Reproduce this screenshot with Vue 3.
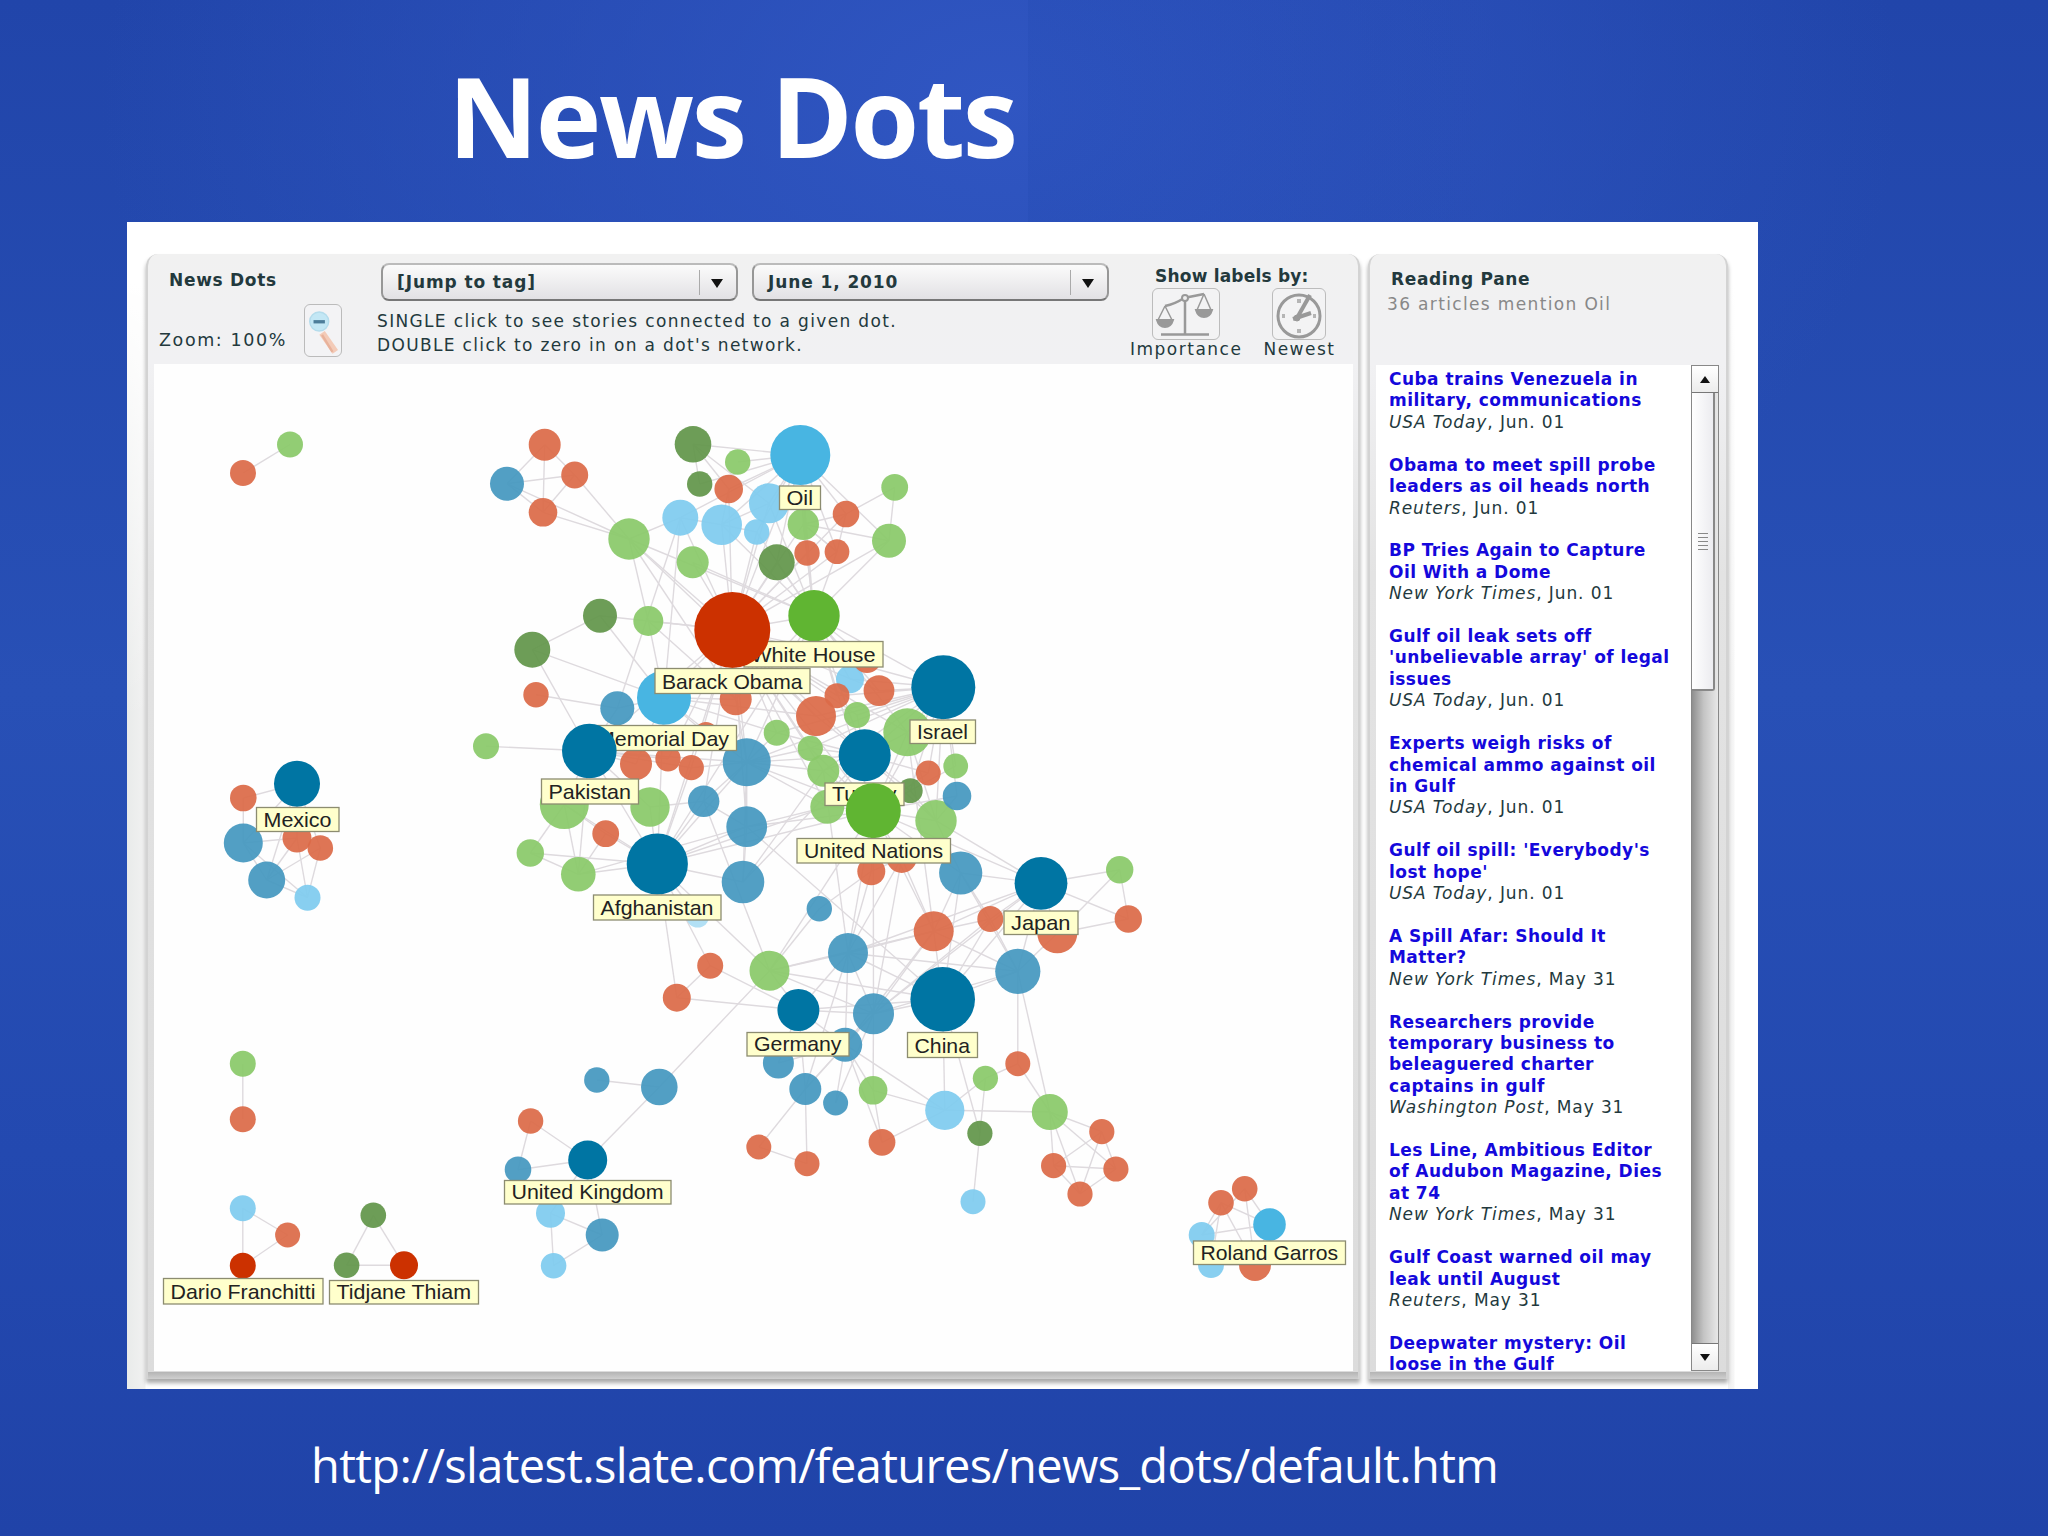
<template>
  <div class="slide">
    <h1 class="title">News Dots</h1>

    <div class="page">
      <section class="panel map-panel">
        <header class="map-header">
          <div class="brand">
            <b class="brand-name">News Dots</b>
            <div class="zoom-row">
              <span>Zoom: 100%</span>
              <button class="zoom-btn">
                <svg viewBox="0 0 38 52" width="38" height="52">
                  <path d="M18 28 L32 48" stroke="#f3cbb8" stroke-width="7" />
                  <path d="M18 30 L29 48" stroke="#e8b29b" stroke-width="2.5" />
                  <circle cx="15" cy="16" r="10" fill="#c3e7f5" stroke="#b4dcec" stroke-width="1.5" />
                  <rect x="9" y="14.5" width="12" height="3.5" fill="#4c7d9a" />
                </svg>
              </button>
            </div>
          </div>

          <div class="controls">
            <div class="selects">
              <div v-for="s in selects" :key="s" class="select">
                <span class="select-text">{{ s }}</span>
                <span class="select-arrow"></span>
              </div>
            </div>
            <p class="help">SINGLE click to see stories connected to a given dot.</p>
            <p class="help">DOUBLE click to zero in on a dot's network.</p>
          </div>

          <div class="labels-by">
            <b class="labels-title">Show labels by:</b>
            <div class="modes">
              <div class="mode">
                <span class="mode-btn">
                  <svg viewBox="0 0 66 50" width="66" height="50" fill="none" stroke="#999" stroke-width="2">
                    <path d="M32 8 V45 M8 45.5 H56 M12 17 Q22 15 31 9 L51 5" stroke-width="2.5" />
                    <circle cx="32" cy="9" r="3" fill="#eee" />
                    <path d="M12 17 L5 31 M12 17 L19 31 M51 5 L44 21 M51 5 L58 21" stroke-width="1.5" />
                    <path d="M4 31 H20 Q18 38 12 38 Q6 38 4 31 Z M43 21 H59 Q57 28 51 28 Q45 28 43 21 Z" fill="#999" />
                  </svg>
                </span>
                <span>Importance</span>
              </div>
              <div class="mode">
                <span class="mode-btn">
                  <svg viewBox="0 0 52 50" width="52" height="50" fill="none" stroke="#999">
                    <circle cx="26" cy="27" r="21" stroke-width="3" />
                    <path d="M24 29 L37 6" stroke-width="4" />
                    <path d="M20 30 L38 24" stroke-width="4" />
                    <circle cx="24" cy="29" r="3" fill="#999" />
                    <path d="M26 10 v4 M26 40 v4 M9 27 h3 M40 27 h3" stroke-width="4" stroke="#b5b5b5" />
                  </svg>
                </span>
                <span>Newest</span>
              </div>
            </div>
          </div>
        </header>

        <svg class="map" viewBox="154 364 1199 1007" width="1199" height="1007">
          <g class="edges">
            <line v-for="(e, i) in lines" :key="i" :x1="e[0].x" :y1="e[0].y" :x2="e[1].x" :y2="e[1].y" />
          </g>
          <circle
            v-for="(d, i) in small"
            :key="i"
            :cx="d.x"
            :cy="d.y"
            :r="d.r"
            :class="['dot', d.kind]"
          />
          <g v-for="t in tags" :key="t.text">
            <circle :cx="t.x" :cy="t.y" :r="t.r" :class="t.kind" />
            <rect class="tag" :x="t.left" :y="t.top" :width="t.right - t.left" :height="t.bottom - t.top" />
            <text
              class="tag-text"
              :x="t.left + 7"
              :y="t.bottom - 5"
              :textLength="t.right - t.left - 14.5"
              lengthAdjust="spacingAndGlyphs"
            >{{ t.text }}</text>
          </g>
        </svg>
      </section>

      <section class="panel reading-panel">
        <header class="reading-header">
          <b class="reading-title">Reading Pane</b>
          <span class="reading-count">36 articles mention Oil</span>
        </header>
        <div class="reading-body">
          <div class="articles">
            <article v-for="a in articles" :key="a.lines[0]" class="article">
              <a v-for="line in a.lines" :key="line" class="headline">{{ line }}</a>
              <div v-if="a.source" class="source"><i>{{ a.source }}</i>, {{ a.date }}</div>
            </article>
          </div>
          <div class="scrollbar">
            <span class="scroll-btn"><i class="up"></i></span>
            <div class="track">
              <div class="thumb"><span class="grip"></span></div>
            </div>
            <span class="scroll-btn"><i class="down"></i></span>
          </div>
        </div>
      </section>
    </div>

    <p class="url">http://slatest.slate.com/features/news_dots/default.htm</p>
  </div>
</template>

<script setup>
const selects = ['[Jump to tag]', 'June 1, 2010']

// id: [x, y, radius, kind]
const dots = {
  a1: [290, 444.5, 13, 'green'], a2: [243, 473, 13, 'orange'],
  b1: [544.7, 444.7, 16, 'orange'], b2: [507, 483.7, 17, 'blue'],
  b3: [574.7, 475, 13.5, 'orange'], b4: [543, 512.3, 14.3, 'orange'],
  b5: [629, 539, 20.7, 'green'],
  c1: [693, 444.3, 18.3, 'olive'], c2: [737.7, 462, 12.7, 'green'],
  c3: [699.7, 484, 12.7, 'olive'], c4: [728.7, 489, 14.3, 'orange'],
  c5: [680.3, 517.7, 18, 'light'], c6: [721.7, 524.7, 20.3, 'light'],
  c7: [769, 503.3, 20, 'light'], c8: [756.7, 532, 12.7, 'light'],
  c9: [803.3, 524.3, 15.7, 'green'], c10: [846, 514, 13.3, 'orange'],
  c11: [894.7, 487.3, 13.4, 'green'], c12: [889, 540.7, 17, 'green'],
  c13: [692.7, 562.3, 16, 'green'], c14: [776.7, 562.3, 18, 'olive'],
  c15: [807, 553, 12.7, 'orange'], c16: [837, 551.7, 12.4, 'orange'],
  d1: [600, 615.7, 17, 'olive'], d2: [648.3, 621, 15, 'green'],
  d3: [532.3, 649.7, 18, 'olive'], d4: [536, 694.7, 12.7, 'orange'],
  d5: [617.3, 708.3, 17, 'blue'], d6: [735.7, 699.3, 16, 'orange'],
  d7: [486, 746.3, 13, 'green'], d8: [706, 734, 12, 'orange'],
  e1: [816, 716, 20, 'orange'], e2: [850, 679.3, 14, 'light'],
  e3: [837, 695.7, 12.5, 'orange'], e4: [867, 659, 14, 'orange'],
  e5: [879, 690.7, 15.4, 'orange'], e6: [857, 715, 13, 'green'],
  e7: [907.3, 732.3, 24, 'green'], e8: [776.7, 732.7, 13, 'green'],
  e9: [810.3, 748.3, 12.6, 'green'], e10: [823.3, 770.7, 16, 'green'],
  e11: [746.7, 762.3, 24, 'blue'], e12: [827.3, 806.7, 17, 'green'],
  e13: [936, 820.7, 20.7, 'green'], e14: [910.3, 790.7, 12.4, 'olive'],
  e15: [928.3, 773, 12.4, 'orange'], e16: [955.7, 766, 12.4, 'green'],
  e17: [957, 796, 14.3, 'blue'],
  f1: [636, 764, 16, 'orange'], f2: [668, 758.7, 12.7, 'orange'],
  f3: [691.3, 767.7, 12.6, 'orange'], f4: [564.3, 804.5, 24.5, 'green'],
  f5: [650, 807, 19.7, 'green'], f6: [605.7, 833.7, 13.4, 'orange'],
  f7: [703.7, 801.3, 15.7, 'blue'], f8: [530.3, 853, 13.7, 'green'],
  f9: [578.3, 874.3, 17.3, 'green'], f10: [746.7, 826.7, 20.4, 'blue'],
  f11: [743, 882, 21.3, 'blue'], f12: [697.7, 916, 11.5, 'light faint'],
  g1: [819.3, 908.7, 12.7, 'blue'], g2: [871.3, 871.3, 14, 'orange'],
  g3: [901.7, 858, 15, 'orange'], g4: [960.7, 873, 21.6, 'blue'],
  g5: [1119.7, 869.7, 13.7, 'green'], g6: [1128.3, 919, 13.7, 'orange'],
  g7: [990.3, 919, 13, 'orange'], g8: [1057.3, 933.3, 20, 'orange'],
  g9: [933.7, 931.3, 20, 'orange'],
  h1: [710.2, 965.7, 13, 'orange'], h2: [676.8, 997.7, 14, 'orange'],
  h3: [769.5, 970.7, 20, 'green'], h4: [848, 953, 20, 'blue'],
  h5: [873.5, 1013.7, 20.5, 'blue'], h6: [845.2, 1044.7, 17, 'blue'],
  h7: [778.4, 1063, 15.5, 'blue'], h8: [805.3, 1089, 16, 'blue'],
  h9: [835.6, 1103, 12.5, 'blue'], h10: [873.1, 1090.3, 14.3, 'green'],
  h11: [758.8, 1147, 12.5, 'orange'], h12: [807, 1163.7, 12.5, 'orange'],
  h13: [882, 1142.3, 13.4, 'orange'], h14: [944.8, 1110.3, 19.6, 'light'],
  h15: [985.4, 1078.3, 12.6, 'green'], h16: [1017.8, 1063.7, 12.5, 'orange'],
  h17: [1017.8, 971.3, 22.6, 'blue'], h18: [979.9, 1133.3, 12.6, 'olive'],
  h19: [973, 1201.7, 12.5, 'light'],
  i1: [1049.8, 1112, 18, 'green'], i2: [1101.8, 1131.7, 12.6, 'orange'],
  i3: [1053.6, 1165.7, 12.6, 'orange'], i4: [1115.9, 1169, 12.6, 'orange'],
  i5: [1080, 1194, 12.6, 'orange'],
  j1: [659.3, 1087, 18.3, 'blue'], j2: [596.8, 1080, 12.7, 'blue'],
  j3: [530.6, 1121, 12.7, 'orange'], j4: [518, 1169.7, 13.3, 'blue'],
  j5: [550.5, 1213.3, 14.5, 'light'], j6: [602.2, 1235, 16.5, 'blue'],
  j7: [553.6, 1265.7, 12.8, 'light'],
  k1: [242.8, 1063.7, 13, 'green'], k2: [242.8, 1119.3, 13, 'orange'],
  k3: [242.8, 1208.3, 13, 'light'], k4: [287.6, 1235, 12.5, 'orange'],
  k5: [373.3, 1215.3, 12.8, 'olive'], k6: [346.6, 1265.3, 12.8, 'olive'],
  m1: [243.3, 798, 13.3, 'orange'], m2: [243.3, 843, 19.5, 'blue'],
  m3: [297, 838, 14.5, 'orange'], m4: [320.3, 848, 12.8, 'orange'],
  m5: [266.7, 880, 18.5, 'blue'], m6: [307.5, 897.7, 13, 'light'],
  r1: [1244.7, 1188.7, 12.8, 'orange'], r2: [1221, 1202.7, 12.8, 'orange'],
  r3: [1201.7, 1235, 13, 'light'], r4: [1211, 1265, 13, 'light'],
  r5: [1255, 1265, 16, 'orange'],
}

// id: [x, y, radius, kind, label, left, top, right, bottom], back to front
const labelled = {
  oil: [800.3, 455, 30, 'sky', 'Oil', 779.5, 486, 820.5, 509.5],
  white: [814, 615.7, 25.7, 'lime', 'White House', 744, 641.5, 883, 667],
  memorial: [664, 697.7, 27, 'sky', 'Memorial Day', 590, 725.5, 736.5, 750.5],
  obama: [732.3, 630, 38, 'red', 'Barack Obama', 655, 668.5, 810, 693.5],
  israel: [943.3, 687.3, 32, 'navy', 'Israel', 910, 720, 975.5, 743.5],
  pakistan: [589.3, 751, 27.3, 'navy', 'Pakistan', 541.5, 779, 638.5, 804],
  turkey: [864.7, 755.3, 26, 'navy', 'Turkey', 825, 783, 904, 805.5],
  un: [873.3, 810.7, 27.5, 'lime', 'United Nations', 797, 838.5, 950.5, 863],
  afghan: [657.3, 864, 30.6, 'navy', 'Afghanistan', 593.5, 895, 721, 920],
  japan: [1041, 883.3, 26.4, 'navy', 'Japan', 1004, 911, 1078, 934.5],
  germany: [798.4, 1010, 21, 'navy', 'Germany', 747, 1032.5, 849, 1056],
  china: [942.7, 999.3, 32.3, 'navy', 'China', 907.5, 1032.5, 977.5, 1057.5],
  uk: [587.7, 1160, 19.5, 'navy', 'United Kingdom', 504.5, 1180.5, 671, 1204],
  dario: [242.8, 1265.7, 13, 'red', 'Dario Franchitti', 163.5, 1278.5, 323, 1304],
  tidjane: [404, 1265.3, 14, 'red', 'Tidjane Thiam', 329.5, 1280.5, 478.5, 1304],
  mexico: [297, 783.7, 23, 'navy', 'Mexico', 256.5, 807.5, 339, 831.5],
  roland: [1269.5, 1224.5, 16.3, 'sky', 'Roland Garros', 1193.5, 1241, 1345.5, 1264.5],
}

// each hub is followed by the dots it is linked to
const links = {
  a1: 'a2',
  b1: 'b2 b3 b4',
  b2: 'b3 b4 b5',
  b3: 'b4 b5',
  b4: 'b5',
  b5: 'c5 d2 obama white d6 e1',
  c1: 'oil c3 c4 c7',
  oil: 'c2 c3 c4 c5 c6 c7 c8 c9 c10 c14 c15 c16 obama white c12',
  c5: 'c6 d5 obama memorial',
  c6: 'c7 c8 white c4',
  c9: 'c10 c12 c15 c16',
  c11: 'c12 c10',
  c16: 'c10 c9 white',
  obama: 'c6 c7 c8 c9 c10 c12 c13 c14 c15 c16 d2 d6 white memorial israel e1 e3 e4 e5 e6 e7 e8 e9 e10 e11 turkey un afghan pakistan f3 f2 f7 c4 e12 f10',
  white: 'c8 c7 c12 c14 c15 c13 israel e3 e5 e7 un turkey e11 e2 d6 afghan c9 e4',
  d1: 'd2 d3 memorial',
  d2: 'obama memorial d6',
  d3: 'memorial pakistan',
  d4: 'd5',
  d5: 'memorial pakistan',
  d7: 'pakistan',
  memorial: 'd6 e11 f1 e8 e1 afghan d8',
  israel: 'e1 e2 e3 e5 e6 e7 turkey un e13 e14 e15 e16 e17 e10 e9 e11 e8',
  turkey: 'e1 e6 e7 e9 e10 e12 e13 e14 e15 e11 f11 e8',
  un: 'e7 e9 e10 e12 e13 e14 e15 e16 e17 g2 g3 f10 e11 afghan g4 h4 h5 h3 g9',
  e11: 'e8 e9 e10 e12 f3 f7 f10 d6 f11',
  e13: 'e14 e17 g4 japan e7',
  pakistan: 'f1 f4 f5 f2 f3 afghan e11 f9',
  afghan: 'f4 f5 f6 f7 f9 f8 f10 f11 f12 f3 e11 e12 h1 h2 h3',
  f4: 'f6 f8 f9',
  f8: 'f9',
  f9: 'f6 f10',
  f10: 'f11 f7 e12 china',
  f7: 'h3 f5',
  japan: 'g4 g5 g6 g7 g8 g9 h17 h5 h4 china un',
  g5: 'g6 g8',
  g6: 'g8',
  g4: 'g7 g9 china h17',
  g3: 'g9 h4 g2 h5',
  g2: 'g1 h4',
  g1: 'h3',
  g7: 'g9 h5 h17 china',
  g9: 'china h17 h4 h5 h3 e7',
  e10: 'h4 f11',
  h1: 'h2 germany',
  h2: 'germany',
  h3: 'h4 h5 china germany j1',
  h4: 'h5 h6 china germany h8 h17',
  germany: 'h5 h7 h8 h6 china',
  h5: 'china h6 h10 h17 h8',
  h6: 'h8 h9 h10 h14 h7 h13 g9',
  h8: 'h11 h12',
  h9: 'h5',
  h10: 'h14 h13',
  h11: 'h12',
  h13: 'h14',
  h14: 'china h15 i1',
  h15: 'h18 h16',
  h17: 'china h16 i1 g8',
  h18: 'h19 china',
  i1: 'h16 i2 i3 i4 i5',
  i2: 'i3 i4 i5',
  i3: 'i4 i5',
  i4: 'i5',
  j1: 'j2 uk',
  uk: 'j3 j4 j5 j6',
  j3: 'j4',
  j5: 'j6 j7',
  j6: 'j7',
  k1: 'k2',
  k3: 'k4 dario',
  k4: 'dario',
  k5: 'k6 tidjane',
  k6: 'tidjane',
  mexico: 'm1 m2 m3 m4 m5',
  m2: 'm1 m3 m5 m6',
  m5: 'm3 m6 m4',
  m3: 'm6',
  m4: 'm6',
  roland: 'r1 r3 r5',
  r1: 'r3 r5',
  r2: 'r3 r4 r5 roland',
  r4: 'r5',
}

const small = Object.values(dots).map(([x, y, r, kind]) => ({ x, y, r, kind }))
const tags = Object.values(labelled).map(([x, y, r, kind, text, left, top, right, bottom]) => ({
  x, y, r, kind, text, left, top, right, bottom,
}))

const point = (id) => {
  const [x, y] = dots[id] || labelled[id]
  return { x, y }
}
const lines = Object.entries(links).flatMap(([from, to]) =>
  to.split(' ').map((id) => [point(from), point(id)])
)

const articles = [
  { lines: ['Cuba trains Venezuela in', 'military, communications'], source: 'USA Today', date: 'Jun. 01' },
  { lines: ['Obama to meet spill probe', 'leaders as oil heads north'], source: 'Reuters', date: 'Jun. 01' },
  { lines: ['BP Tries Again to Capture', 'Oil With a Dome'], source: 'New York Times', date: 'Jun. 01' },
  { lines: ['Gulf oil leak sets off', "'unbelievable array' of legal", 'issues'], source: 'USA Today', date: 'Jun. 01' },
  { lines: ['Experts weigh risks of', 'chemical ammo against oil', 'in Gulf'], source: 'USA Today', date: 'Jun. 01' },
  { lines: ["Gulf oil spill: 'Everybody's", "lost hope'"], source: 'USA Today', date: 'Jun. 01' },
  { lines: ['A Spill Afar: Should It', 'Matter?'], source: 'New York Times', date: 'May 31' },
  { lines: ['Researchers provide', 'temporary business to', 'beleaguered charter', 'captains in gulf'], source: 'Washington Post', date: 'May 31' },
  { lines: ['Les Line, Ambitious Editor', 'of Audubon Magazine, Dies', 'at 74'], source: 'New York Times', date: 'May 31' },
  { lines: ['Gulf Coast warned oil may', 'leak until August'], source: 'Reuters', date: 'May 31' },
  { lines: ['Deepwater mystery: Oil', 'loose in the Gulf'] },
]
</script>

<style>
body {
  margin: 0;
  overflow: hidden;
}
</style>

<style scoped>
.slide {
  box-sizing: border-box;
  width: 2048px;
  height: 1536px;
  overflow: hidden;
  background:
    linear-gradient(90deg, transparent 1028px, rgba(20, 60, 160, 0.13) 1028px, transparent 1500px) 0 0 / 100% 222px no-repeat,
    radial-gradient(ellipse 900px 620px at 1000px 100px, #3056c2, rgba(48, 86, 194, 0) 100%),
    linear-gradient(180deg, #2145aa 0%, #2850b6 45%, #2349b0 75%, #2043a8 100%);
  font-family: "DejaVu Sans", sans-serif;
  color: #23393d;
}

.title {
  margin: 0;
  height: 222px;
  padding: 40px 0 0 448px;
  box-sizing: border-box;
  font: 700 111px/150px "Open Sans", "Noto Sans", sans-serif;
  letter-spacing: -2.4px;
  color: #fff;
  white-space: nowrap;
}

.page {
  box-sizing: border-box;
  display: flex;
  gap: 8px;
  width: 1631px;
  height: 1167px;
  margin-left: 127px;
  padding: 32px 30px 10px 19px;
  background:
    linear-gradient(180deg, #fff 60px, rgba(255, 255, 255, 0) 500px),
    linear-gradient(90deg, #e9ebea, #f1f1f1 18px, #fff 19px, #fff 1601px, #f1f1f1 1601px, #f6f6f6 1607px, #fff 1608px);
}

.panel {
  box-sizing: border-box;
  border-radius: 12px 12px 0 0;
  border: solid #d3d3d3;
  border-width: 0 2px;
  background:
    linear-gradient(180deg, #b4b4b4, #cfcfcf) 0 100% / 100% 7px no-repeat,
    linear-gradient(180deg, #f1f1f1, #f1f1f3 110px, #e3e3e3 320px, #dcdcdc);
  box-shadow: 0 4px 4px #aaa;
}

.map-panel {
  width: 1214px;
  padding: 0 6px;
}

.reading-panel {
  width: 361px;
  padding: 0 6px;
}

.map-header {
  display: flex;
  height: 110px;
  font-size: 17px;
}

.brand {
  width: 225px;
}

.brand-name {
  display: block;
  padding: 15px 0 0 15px;
  font-size: 17px;
  line-height: 22px;
  letter-spacing: 0.7px;
}

.zoom-row {
  display: flex;
  align-items: center;
  gap: 13px;
  margin-top: 13px;
  padding-left: 5px;
  white-space: nowrap;
  font-size: 17.5px;
  letter-spacing: 1.6px;
}

.zoom-row > span {
  width: 132px;
  padding-top: 18px;
}

.zoom-btn {
  display: flex;
  padding: 0;
  width: 38px;
  height: 53px;
  border: 1px solid #bbb;
  border-radius: 6px;
  background: #f3f3f5;
}

.controls {
  width: 742px;
}

.selects {
  display: flex;
  gap: 14px;
  padding: 9px 0 9px 2px;
}

.select {
  box-sizing: border-box;
  display: flex;
  align-items: center;
  justify-content: space-between;
  width: 357px;
  height: 38px;
  padding: 0 13px 0 14px;
  border: 2px solid #979797;
  border-top-color: #bbb;
  border-bottom-color: #777;
  border-radius: 8px;
  background: linear-gradient(#fbfbfb, #e2e1e4);
  font-weight: 700;
  font-size: 17px;
  letter-spacing: 0.9px;
}

.select-arrow {
  height: 25px;
  padding-left: 11px;
  border-left: 1px solid #aaa;
}

.select-arrow::after {
  content: '';
  display: block;
  margin-top: 9px;
  border: solid transparent;
  border-width: 9px 6.5px 0;
  border-top-color: #111;
}

.help {
  margin: 0 0 0 -2px;
  font-size: 17px;
  line-height: 23.5px;
  letter-spacing: 1.34px;
  white-space: nowrap;
}

.labels-by {
  flex: 1;
}

.labels-title {
  display: block;
  padding: 11px 0 0 34px;
  font-size: 17px;
  line-height: 22px;
  letter-spacing: 0.2px;
  white-space: nowrap;
}

.modes {
  display: flex;
  gap: 21px;
  padding: 1px 0 0 9px;
  line-height: 18px;
  letter-spacing: 1.5px;
}

.mode {
  display: flex;
  flex-direction: column;
  align-items: center;
}

.mode-btn {
  display: flex;
  border: 1px solid #bcbcbc;
  border-radius: 6px;
  background: #f3f3f4;
}

.map {
  display: block;
  background: #fefefe;
}

.edges {
  stroke: #dedade;
  stroke-width: 1.4;
}

.dot {
  opacity: 0.93;
}

.faint {
  opacity: 0.6;
}

.orange { fill: #dc6a48; }
.blue { fill: #4598bf; }
.green { fill: #8ac969; }
.olive { fill: #62964a; }
.light { fill: #7fcbef; }
.sky { fill: #48b5e2; }
.lime { fill: #60b532; }
.navy { fill: #0075a3; }
.red { fill: #cc3100; }

.tag {
  fill: #ffffcc;
  stroke: #8c8c70;
  stroke-width: 1.3;
}

.tag-text {
  font: 21px "Liberation Sans", sans-serif;
  fill: #222;
}

.reading-header {
  display: flex;
  flex-direction: column;
  height: 111px;
  box-sizing: border-box;
  padding: 14px 0 0 12px;
}

.reading-title {
  padding-left: 3px;
  font-size: 17px;
  line-height: 23px;
  letter-spacing: 0.65px;
}

.reading-count {
  font-size: 17px;
  line-height: 27px;
  letter-spacing: 1.35px;
  margin-left: -1px;
  color: #888;
}

.reading-body {
  display: flex;
  width: 343px;
  height: 1006px;
}

.articles {
  flex: 1;
  padding: 4px 0 0 13px;
  background: #fff;
  box-sizing: border-box;
}

.article {
  margin-bottom: 21.42px;
  font-size: 17px;
  line-height: 21.42px;
  white-space: nowrap;
}

.headline {
  display: block;
  font-weight: 700;
  letter-spacing: 0.45px;
  color: #1408dc;
}

.source {
  letter-spacing: 0.9px;
}

.scrollbar {
  box-sizing: border-box;
  display: flex;
  flex-direction: column;
  width: 28px;
  border: 1px solid #888;
}

.scroll-btn {
  display: flex;
  align-items: center;
  justify-content: center;
  height: 26px;
  background: linear-gradient(#fff, #ececec);
}

.up,
.down {
  border: solid transparent;
}

.up {
  border-width: 0 5px 7px;
  border-bottom-color: #111;
}

.down {
  border-width: 7px 5px 0;
  border-top-color: #111;
}

.track {
  flex: 1;
  border: solid #777;
  border-width: 1px 0;
  background: linear-gradient(90deg, #8f8f8f, #c4c4c4 45%, #e8e8e8);
}

.thumb {
  box-sizing: border-box;
  display: flex;
  align-items: center;
  justify-content: center;
  width: 23px;
  height: 298px;
  border: solid #888;
  border-width: 0 2px 2px 0;
  border-radius: 0 0 3px 0;
  background: linear-gradient(90deg, #fff, #ececf0);
}

.grip {
  width: 10px;
  height: 17px;
  background: repeating-linear-gradient(#888 0 1px, transparent 1px 4px);
}

.url {
  margin: 0;
  padding: 44px 0 0 311px;
  font: 400 47px/64px "Open Sans", "Noto Sans", sans-serif;
  letter-spacing: -0.66px;
  color: #fff;
  white-space: nowrap;
}
</style>
